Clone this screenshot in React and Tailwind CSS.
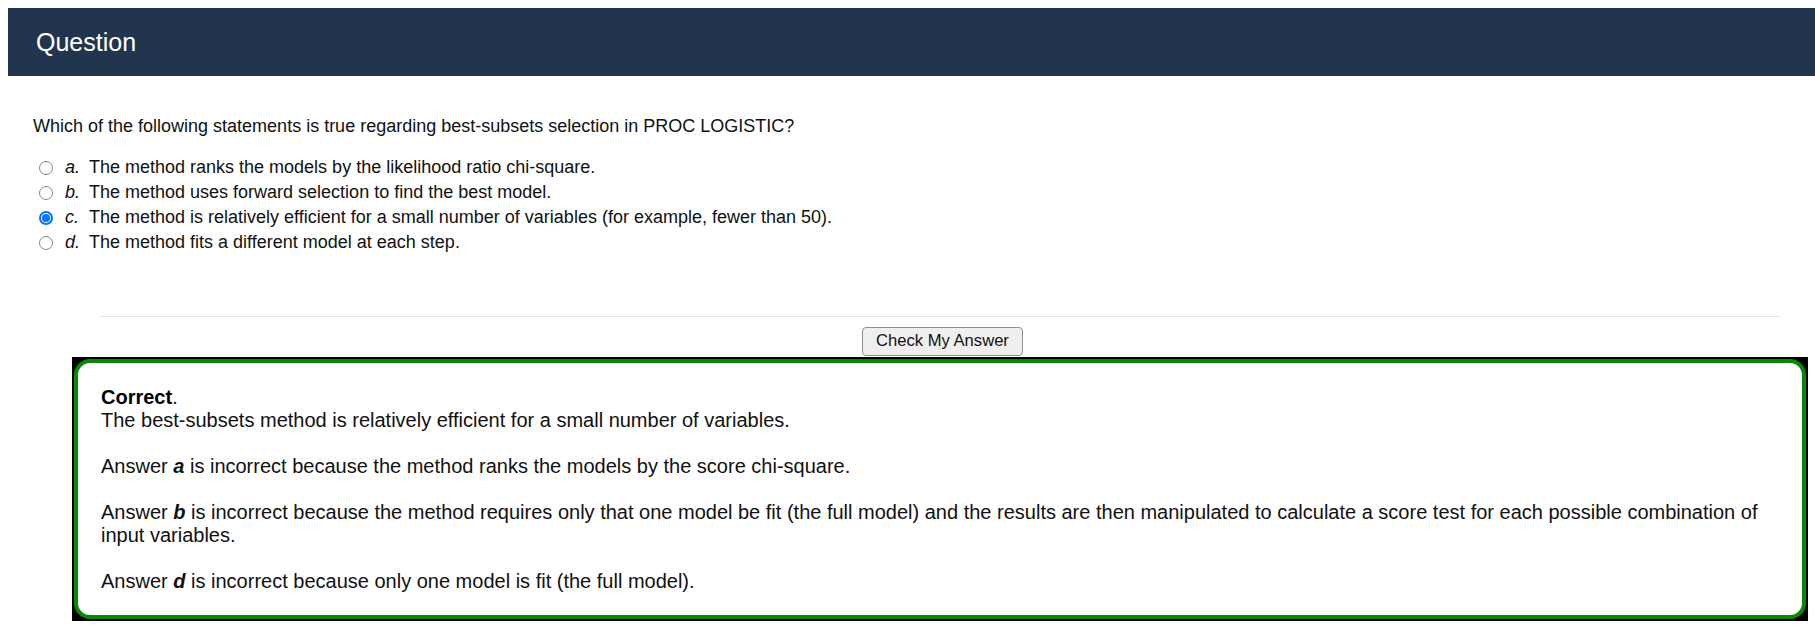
import React from 'react'

const options = [
  { key: 'a', text: 'The method ranks the models by the likelihood ratio chi-square.' },
  { key: 'b', text: 'The method uses forward selection to find the best model.' },
  { key: 'c', text: 'The method is relatively efficient for a small number of variables (for example, fewer than 50).' },
  { key: 'd', text: 'The method fits a different model at each step.' },
]

// custom radio so the size matches the screenshot
const Radio = ({ checked }) =>
  checked ? (
    <span className="ml-[39px] w-[14px] h-[14px] rounded-full border-2 border-[#0075ff] bg-white flex items-center justify-center shrink-0">
      <span className="w-[8px] h-[8px] rounded-full bg-[#0075ff]" />
    </span>
  ) : (
    <span className="ml-[39px] w-[14px] h-[14px] rounded-full border border-[#858585] bg-white shrink-0" />
  )

const Option = ({ letter, text, checked }) => (
  <label className="flex items-center h-[25px]">
    <Radio checked={checked} />
    <span className="ml-[12px] w-[24px] italic">{letter}.</span>
    <span>{text}</span>
  </label>
)

const App = () => {
  return (
    <div className="bg-white text-black font-['Liberation_Sans',Arial,sans-serif] w-[1815px] h-[625px] overflow-hidden">
      <div className="ml-[8px] mt-[8px] h-[68px] bg-[#21354f] flex items-center pl-[28px]">
        <h1 className="text-white text-[25px] leading-none">Question</h1>
      </div>

      <div className="text-[18px] leading-[21px] text-[#111]">
        <p className="pl-[33px] mt-[40px]">
          Which of the following statements is true regarding best-subsets selection in PROC LOGISTIC?
        </p>
        <div className="mt-[18px]">
          {options.map((o) => (
            <Option key={o.key} letter={o.key} text={o.text} checked={o.key === 'c'} />
          ))}
        </div>
      </div>

      <div className="ml-[72px] w-[1736px] mt-[61px]">
        <div className="mx-[28px] h-px bg-[#e3e3e3]" />
        <div className="flex justify-center mt-[10px]">
          <button className="w-[161px] h-[29px] bg-[#efefef] border border-[#8f8f8f] rounded-[4px] text-[16.6px] text-[#111] ml-[5px]">
            Check My Answer
          </button>
        </div>
        <div className="mt-[1px] bg-black p-[2px]">
          <div className="bg-white border-4 border-[#088808] rounded-[16px] px-[23px] pt-[23px] pb-[22px] text-[20px] leading-[23px] text-[#111]">
            <p>
              <b className="text-black">Correct</b>.
              <br />
              The best-subsets method is relatively efficient for a small number of variables.
            </p>
            <p className="mt-[23px]">
              Answer <b className="italic">a</b> is incorrect because the method ranks the models by the score chi-square.
            </p>
            <p className="mt-[23px]">
              Answer <b className="italic">b</b> is incorrect because the method requires only that one model be fit (the full model) and the results are then manipulated to calculate a score test for each possible combination of input variables.
            </p>
            <p className="mt-[23px]">
              Answer <b className="italic">d</b> is incorrect because only one model is fit (the full model).
            </p>
          </div>
        </div>
      </div>
    </div>
  )
}

export default App
